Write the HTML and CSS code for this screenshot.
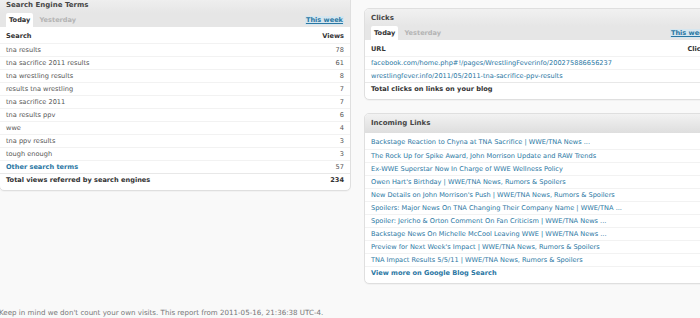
FILE: index.html
```html
<!DOCTYPE html>
<html lang="en">
<head>
    <meta charset="UTF-8">
    <title>Blog Stats</title>
    <link rel="stylesheet" href="styles.css">
</head>
<body>
<div class="stats-wrap">
    <div class="stats-col stats-col-left">
        <div class="postbox">
            <h3>Search Engine Terms</h3>
            <div class="tabs">
                <span class="tab active">Today</span>
                <span class="tab">Yesterday</span>
                <a href="#" class="week-link">This week</a>
            </div>
            <table class="stats-table">
                <tr class="head"><th>Search</th><th class="num">Views</th></tr>
                <tr><td>tna results</td><td class="num">78</td></tr>
                <tr><td>tna sacrifice 2011 results</td><td class="num">61</td></tr>
                <tr><td>tna wrestling results</td><td class="num">8</td></tr>
                <tr><td>results tna wrestling</td><td class="num">7</td></tr>
                <tr><td>tna sacrifice 2011</td><td class="num">7</td></tr>
                <tr><td>tna results ppv</td><td class="num">6</td></tr>
                <tr><td>wwe</td><td class="num">4</td></tr>
                <tr><td>tna ppv results</td><td class="num">3</td></tr>
                <tr><td>tough enough</td><td class="num">3</td></tr>
                <tr><td><a href="#" class="strong-link">Other search terms</a></td><td class="num">57</td></tr>
                <tr class="total"><th>Total views referred by search engines</th><th class="num">234</th></tr>
            </table>
        </div>
    </div>
    <div class="stats-col stats-col-right">
        <div class="postbox">
            <h3>Clicks</h3>
            <div class="tabs">
                <span class="tab active">Today</span>
                <span class="tab">Yesterday</span>
                <a href="#" class="week-link">This week</a>
            </div>
            <table class="stats-table">
                <tr class="head"><th>URL</th><th class="num">Clicks</th></tr>
                <tr><td><a href="#">facebook.com/home.php#!/pages/WrestlingFeverinfo/200275886656237</a></td><td class="num">1</td></tr>
                <tr><td><a href="#">wrestlingfever.info/2011/05/2011-tna-sacrifice-ppv-results</a></td><td class="num">1</td></tr>
                <tr class="total"><th>Total clicks on links on your blog</th><th class="num">2</th></tr>
            </table>
        </div>
        <div class="postbox plain">
            <h3>Incoming Links</h3>
            <table class="stats-table">
                <tr><td><a href="#">Backstage Reaction to Chyna at TNA Sacrifice | WWE/TNA News ...</a></td></tr>
                <tr><td><a href="#">The Rock Up for Spike Award, John Morrison Update and RAW Trends</a></td></tr>
                <tr><td><a href="#">Ex-WWE Superstar Now In Charge of WWE Wellness Policy</a></td></tr>
                <tr><td><a href="#">Owen Hart's Birthday | WWE/TNA News, Rumors &amp; Spoilers</a></td></tr>
                <tr><td><a href="#">New Details on John Morrison's Push | WWE/TNA News, Rumors &amp; Spoilers</a></td></tr>
                <tr><td><a href="#">Spoilers: Major News On TNA Changing Their Company Name | WWE/TNA ...</a></td></tr>
                <tr><td><a href="#">Spoiler: Jericho &amp; Orton Comment On Fan Criticism | WWE/TNA News ...</a></td></tr>
                <tr><td><a href="#">Backstage News On Michelle McCool Leaving WWE | WWE/TNA News ...</a></td></tr>
                <tr><td><a href="#">Preview for Next Week's Impact | WWE/TNA News, Rumors &amp; Spoilers</a></td></tr>
                <tr><td><a href="#">TNA Impact Results 5/5/11 | WWE/TNA News, Rumors &amp; Spoilers</a></td></tr>
                <tr><td><a href="#" class="strong-link">View more on Google Blog Search</a></td></tr>
            </table>
        </div>
    </div>
</div>
<p class="note">Keep in mind we don't count your own visits. This report from 2011-05-16, 21:36:38 UTC-4.</p>
</body>
</html>
```

FILE: styles.css
```css
body {
    margin: 0;
    padding: 0;
    overflow: hidden;
    background-color: #f9f9f9;
    color: #555;
    font-family: "DejaVu Sans", Verdana, sans-serif;
    font-size: 6.6px;
}
a {
    color: #2a77a3;
    text-decoration: none;
}
.stats-wrap {
    display: flex;
    align-items: flex-start;
    gap: 13px;
    width: 720px;
    margin-left: -1px;
}
.stats-col {
    width: 352px;
    flex: none;
}
.stats-col-left {
    margin-top: -5px;
}
.stats-col-right {
    padding-top: 8px;
}
.postbox {
    background-color: #fff;
    border: 1px solid #dfdfdf;
    border-radius: 5px;
    overflow: hidden;
    margin-bottom: 13px;
    box-shadow: 0 1px 1px rgba(0, 0, 0, 0.03);
}
.postbox h3 {
    margin: 0;
    height: 17px;
    line-height: 19px;
    padding: 0 6px;
    font-size: 7px;
    font-weight: bold;
    color: #464646;
    background: linear-gradient(to bottom, #f1f1f1, #e6e6e6);
}
.postbox.plain h3 {
    height: 19px;
    line-height: 19px;
    background: linear-gradient(to bottom, #f2f2f2, #dedede);
}
.tabs {
    display: flex;
    align-items: flex-end;
    height: 14px;
    padding: 0 6px;
    background-color: #e6e6e6;
}
.tab {
    height: 14px;
    line-height: 14px;
    padding: 0 3px;
    margin-right: 3px;
    font-weight: bold;
    color: #b4b4b4;
    border-radius: 2px 2px 0 0;
}
.tab.active {
    background-color: #fff;
    color: #333;
}
.week-link {
    margin-left: auto;
    align-self: center;
    font-weight: bold;
    text-decoration: underline;
    background-color: #d6e6ef;
    padding: 0 1px;
    line-height: 9px;
}
.stats-table {
    width: 100%;
    border-collapse: collapse;
    margin: 3px 0 4px;
}
.stats-table td,
.stats-table th {
    height: 13px;
    padding: 0 6px;
    text-align: left;
    white-space: nowrap;
    box-sizing: border-box;
    border-top: 1px solid #f2f2f2;
}
.stats-table tr:first-child td,
.stats-table tr:first-child th {
    border-top: 0;
}
.stats-table th {
    font-weight: bold;
    color: #333;
}
.stats-table .num {
    text-align: right;
}
.stats-table .total th {
    border-top: 1px solid #e8e8e8;
}
.strong-link {
    font-weight: bold;
}
.note {
    margin: 9px 0 0 -1px;
    line-height: 13px;
    font-size: 7.1px;
    color: #777;
}
```
